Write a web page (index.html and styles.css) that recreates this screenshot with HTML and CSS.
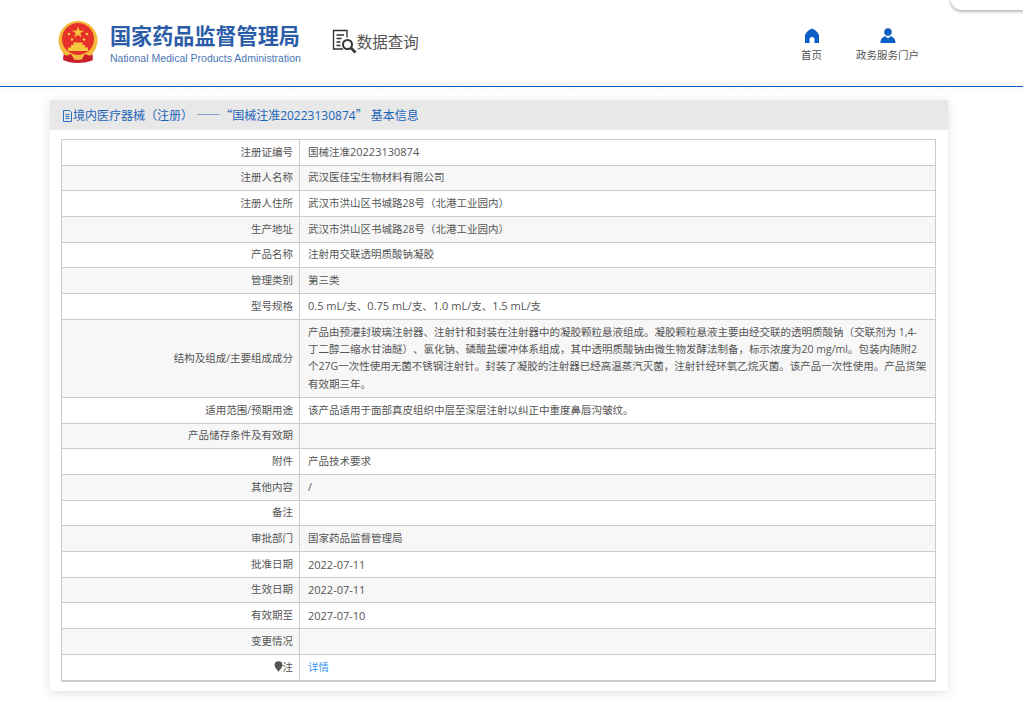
FILE: index.html
```html
<!DOCTYPE html>
<html lang="zh-CN">
<head>
    <meta charset="UTF-8">
    <title>国家药品监督管理局 数据查询</title>
    <link rel="stylesheet" href="styles.css">
</head>
<body>
    <div class="corner"></div>
    <header class="top">
        <div class="logo">
            <svg class="emblem" width="40" height="42" viewBox="0 0 40 42">
                <path d="M6 30l-1 9c4 2 9 3 15 3s11-1 15-3l-1-9z" fill="#c9202a"/>
                <circle cx="20" cy="19.500" r="19.500" fill="#f3b93a"/>
                <circle cx="20" cy="18" r="16" fill="#e6302a"/>
                <path d="M7 28c4 4 9 6 13 6s9-2 13-6l1 3c-4 4-9 6-14 6S10 35 6 31z" fill="#f3b93a"/>
                <path d="M5 36l8-3 3 5-4 3zM35 36l-8-3-3 5 4 3z" fill="#c9202a"/>
                <path d="M20 5.500l1.500 4.200h4.400l-3.600 2.600 1.400 4.200-3.700-2.600-3.700 2.600 1.400-4.200-3.600-2.600h4.400z" fill="#f6c63c"/>
                <circle cx="11" cy="13" r="1.300" fill="#f6c63c"/>
                <circle cx="29" cy="13" r="1.300" fill="#f6c63c"/>
                <circle cx="14" cy="18.500" r="1.300" fill="#f6c63c"/>
                <circle cx="26" cy="18.500" r="1.300" fill="#f6c63c"/>
                <path d="M10 30h20v-3.500h-3V24h-2.500v-2.500h-9V24H13v2.500h-3z" fill="#f6c63c"/>
            </svg>
            <div class="logo-text">
                <div class="logo-cn">国家药品监督管理局</div>
                <div class="logo-en">National Medical Products Administration</div>
            </div>
        </div>
        <div class="query">
            <svg width="25" height="25" viewBox="0 0 25 25" fill="none" stroke="#333" stroke-width="1.300">
                <path d="M11 20H1.500V1.500h13.500v7"/>
                <path d="M4.500 6h7.500M4.500 9.500h5M4.500 13h4M4.500 16.500h4"/>
                <circle cx="15.500" cy="15.500" r="4.500" stroke-width="2"/>
                <path d="M19 19l4.500 4.500" stroke-width="2.600"/>
            </svg>
            <span>数据查询</span>
        </div>
        <nav class="links">
            <a href="#">
                <svg width="16" height="15" viewBox="0 0 16 15"><path d="M8 .5C5 1.500 2.500 4 1 7v8h4.500v-4c0-1 1-2 2.500-2s2.500 1 2.500 2v4H15V7C13.500 4 11 1.500 8 .5z" fill="#0b5fc4"/></svg>
                首页
            </a>
            <a href="#">
                <svg width="16" height="15" viewBox="0 0 16 15"><circle cx="8" cy="4" r="3.800" fill="#0b5fc4"/><path d="M.5 15c0-4 2-6 5-6.700L8 10.500l2.500-2.200c3 .7 5 2.700 5 6.700z" fill="#0b5fc4"/></svg>
                政务服务门户
            </a>
        </nav>
    </header>
    <div class="hatch"></div>
    <main class="panel">
        <h2 class="panel-title">
            <svg width="11" height="12" viewBox="0 0 11 12" fill="none" stroke="#2a6fc0"><path d="M1.500 .5h6l2 2v9h-8zM3.500 4.500h4M3.500 6.500h4M3.500 8.500h4"/></svg>境内医疗器械（注册） <span class="cjk">——“</span>国械注准20223130874<span class="cjk">”</span> 基本信息
        </h2>
        <table class="info">
            <tr><th>注册证编号</th><td>国械注准<span class="num">20223130874</span></td></tr>
            <tr><th>注册人名称</th><td>武汉医佳宝生物材料有限公司</td></tr>
            <tr><th>注册人住所</th><td>武汉市洪山区书城路28号（北港工业园内）</td></tr>
            <tr><th>生产地址</th><td>武汉市洪山区书城路28号（北港工业园内）</td></tr>
            <tr><th>产品名称</th><td>注射用交联透明质酸钠凝胶</td></tr>
            <tr><th>管理类别</th><td>第三类</td></tr>
            <tr><th>型号规格</th><td><span class="num">0.5 mL/</span>支、<span class="num">0.75 mL/</span>支、<span class="num">1.0 mL/</span>支、<span class="num">1.5 mL/</span>支</td></tr>
            <tr class="tall"><th>结构及组成/主要组成成分</th><td>产品由预灌封玻璃注射器、注射针和封装在注射器中的凝胶颗粒悬液组成。凝胶颗粒悬液主要由经交联的透明质酸钠（交联剂为 1,4-丁二醇二缩水甘油醚）、氯化钠、磷酸盐缓冲体系组成，其中透明质酸钠由微生物发酵法制备，标示浓度为20 mg/ml。包装内随附2个27G一次性使用无菌不锈钢注射针。封装了凝胶的注射器已经高温蒸汽灭菌，注射针经环氧乙烷灭菌。该产品一次性使用。产品货架有效期三年。</td></tr>
            <tr><th>适用范围/预期用途</th><td>该产品适用于面部真皮组织中层至深层注射以纠正中重度鼻唇沟皱纹。</td></tr>
            <tr><th>产品储存条件及有效期</th><td></td></tr>
            <tr><th>附件</th><td>产品技术要求</td></tr>
            <tr><th>其他内容</th><td>/</td></tr>
            <tr><th>备注</th><td></td></tr>
            <tr><th>审批部门</th><td>国家药品监督管理局</td></tr>
            <tr><th>批准日期</th><td class="num">2022-07-11</td></tr>
            <tr><th>生效日期</th><td class="num">2022-07-11</td></tr>
            <tr><th>有效期至</th><td class="num">2027-07-10</td></tr>
            <tr><th>变更情况</th><td></td></tr>
            <tr class="last"><th><svg class="pin" width="9" height="11" viewBox="0 0 9 11"><path d="M4.500 11C3 8 .5 6.500 .5 4.200a4 4 0 0 1 8 0C8.500 6.500 6 8 4.500 11z" fill="#555"/></svg>注</th><td><a href="#">详情</a></td></tr>
        </table>
    </main>
</body>
</html>
```

FILE: styles.css
```css
body {
    margin: 0;
    background: #fff;
    font-family: "Open Sans", "Noto Sans CJK SC", sans-serif;
    font-size: 10.5px;
    color: #555;
    text-spacing-trim: space-all;
}
.corner {
    position: absolute;
    top: -20px;
    right: -20px;
    width: 93px;
    height: 30px;
    background: #fff;
    border-radius: 12px;
    box-shadow: 0 2px 3px rgba(0,0,0,.28);
}
.top {
    height: 86px;
    border-bottom: 1px solid #0b5fc4;
    display: flex;
    align-items: flex-start;
}
.logo {
    display: flex;
    margin: 21px 0 0 58px;
}
.emblem {
    margin-right: 12px;
}
.logo-cn {
    font-size: 21.100px;
    font-weight: 700;
    line-height: 30px;
    color: #2b5ca8;
    white-space: nowrap;
}
.logo-en {
    font-family: "Liberation Sans", sans-serif;
    font-size: 10.500px;
    line-height: 13px;
    margin-top: 1px;
    color: #4a76b4;
    white-space: nowrap;
}
.query {
    display: flex;
    align-items: center;
    margin: 29px 0 0 31px;
    font-size: 15.500px;
    line-height: 24px;
    color: #555;
}
.links {
    display: flex;
    margin: 28px 0 0 auto;
    padding-right: 104px;
    gap: 34px;
}
.links a {
    display: flex;
    flex-direction: column;
    align-items: center;
    color: #555;
    text-decoration: none;
    line-height: 16px;
    gap: 4px;
}
.hatch {
    height: 5px;
    background: repeating-linear-gradient(135deg, #f5f5f5 0 1px, #fff 1px 3px);
}
.panel {
    width: 898px;
    margin: 8px 0 16px 50px;
    padding-bottom: 9px;
    background: #fff;
    box-shadow: 0 2px 10px rgba(0,0,0,.12);
}
.panel-title {
    margin: 0 0 9px;
    height: 30px;
    padding-left: 12px;
    background: #e8e8e8;
    color: #1d65b8;
    font-size: 12px;
    font-weight: 400;
    line-height: 30px;
}
.panel-title svg {
    vertical-align: -2px;
}
.cjk {
    font-family: "Noto Sans CJK SC", sans-serif;
}
.info {
    width: 875px;
    margin-left: 11px;
    border-collapse: collapse;
    table-layout: fixed;
    border-bottom: 2px solid #ccc;
}
.info tr {
    height: 25.700px;
}
.info tr.tall {
    height: 78px;
}
.info tr.last {
    height: 27px;
}
.info tr:nth-child(even) {
    background: #f7f7f7;
}
.info th, .info td {
    border: 1px solid #ccc;
    padding: 0 8px;
    font-weight: 400;
    line-height: 17.300px;
}
.info th {
    width: 231px;
    padding: 0 6px 0 0;
    text-align: right;
}
.info .last th, .info .last td {
    padding-top: 1px;
}
.info .num {
    font-size: 11px;
}
.info a {
    color: #3c97f0;
    text-decoration: none;
    font-size: 10.500px;
}
.pin {
    vertical-align: -1px;
}
```
